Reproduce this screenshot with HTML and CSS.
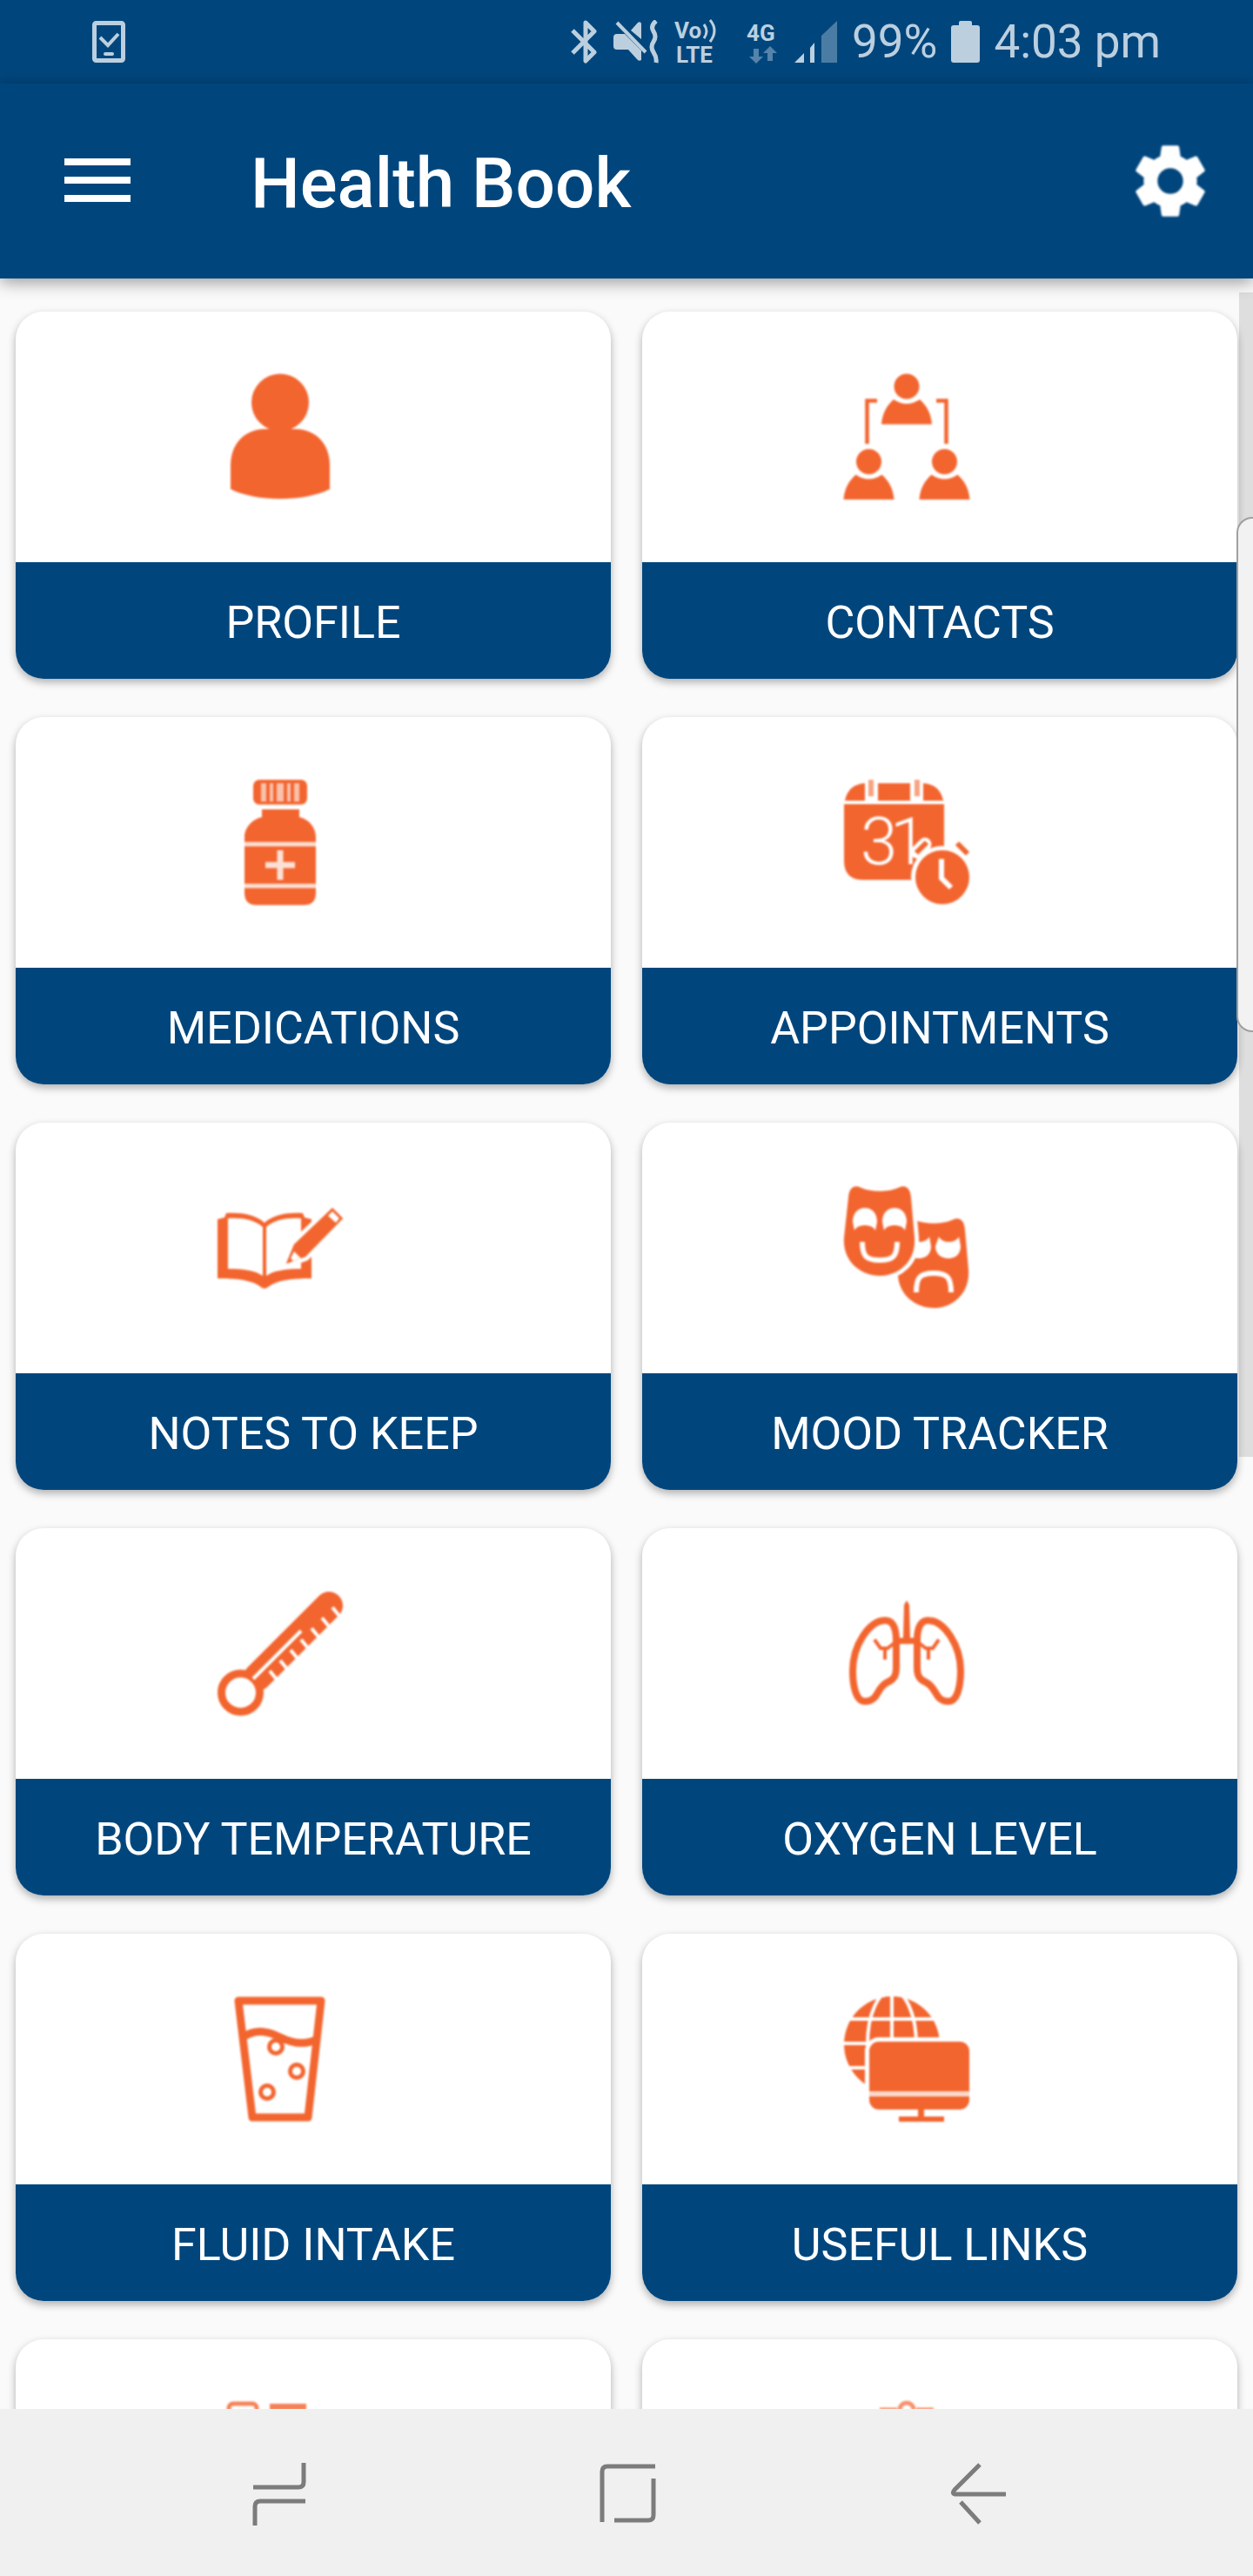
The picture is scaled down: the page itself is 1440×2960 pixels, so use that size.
FILE: index.html
```html
<!DOCTYPE html>
<html lang="en">
<head>
<meta charset="utf-8">
<meta name="viewport" content="width=device-width, initial-scale=1">
<title>Health Book</title>
<link rel="stylesheet" href="styles.css">
</head>
<body>
<div class="app">
  <div class="status">
    <svg class="status-task" width="38" height="48" viewBox="0 0 38 48" fill="none" stroke="currentColor"><rect x="2.5" y="2.5" width="33" height="43" rx="2" stroke-width="5"/><path d="M9 19l9 9L30 15" stroke-width="4"/><path d="M15 38h8" stroke-width="4" stroke-linecap="round"/></svg>
    <div class="status-right">
      <svg width="34" height="50" viewBox="0 0 34 50" fill="none" stroke="currentColor" stroke-width="5" stroke-linejoin="round"><path d="M3 12l25 25-10 10V3l10 10L3 38"/></svg>
      <svg width="54" height="50" viewBox="0 0 54 50"><path fill="currentColor" d="M4 16h9L32 35v11q-3 2-5-1L17 34H4q-4 0-4-4V20q0-4 4-4zM32 4v18L20 12l8-9q3-2 4 1z"/><path d="M4 3l33 34" stroke="currentColor" stroke-width="4"/><path d="M49 1q-7 6-3 12t0 12 0 12 3 12" fill="none" stroke="currentColor" stroke-width="5"/></svg>
      <svg class="badge" width="54" height="52" viewBox="0 0 54 52" fill="currentColor"><text class="net" x="0" y="22">Vo</text><text class="net" x="2" y="50">LTE</text><path d="M34 6q6 8 0 16M41 1q10 12 0 25" fill="none" stroke="currentColor" stroke-width="3"/></svg>
      <svg class="badge" width="52" height="50" viewBox="0 0 52 50" fill="currentColor"><text class="net" x="13" y="24">4G</text><path opacity=".45" d="M21 33h6v9h5l-8 8-8-8h5zM37 47h6v-9h5l-8-8-8 8h5z"/></svg>
      <svg width="50" height="50" viewBox="0 0 50 50" fill="currentColor"><path d="M0 49l11-11v11zM18 32l5-6v23h-5z"/><path opacity=".4" d="M31 18L49 1v48H31z"/></svg>
      <span>99%</span>
      <svg width="33" height="48" viewBox="0 0 33 48" fill="currentColor"><path d="M9 5V2q0-2 2-2h11q2 0 2 2v3h6q3 0 3 3v37q0 3-3 3H3q-3 0-3-3V8q0-3 3-3z"/></svg>
      <span>4:03 pm</span>
    </div>
  </div>

  <header class="appbar">
    <button class="icon-btn" type="button" aria-label="Menu">
      <svg width="76" height="52" viewBox="0 0 76 52" fill="currentColor"><path d="M0 0h76v8H0zM0 21h76v8H0zM0 42h76v8H0z"/></svg>
    </button>
    <h1 class="title">Health Book</h1>
    <button class="icon-btn" type="button" aria-label="Settings">
      <svg class="soft" width="98" height="98" viewBox="0 0 24 24" fill="currentColor"><path d="M19.43 12.98c.04-.32.07-.64.07-.98s-.03-.66-.07-.98l2.11-1.65c.19-.15.24-.42.12-.64l-2-3.46c-.12-.22-.39-.3-.61-.22l-2.49 1c-.52-.4-1.08-.73-1.69-.98l-.38-2.65A.49.49 0 0 0 14 2h-4c-.25 0-.46.18-.49.42l-.38 2.65c-.61.25-1.17.59-1.69.98l-2.49-1c-.23-.09-.49 0-.61.22l-2 3.46c-.13.22-.07.49.12.64l2.11 1.65c-.04.32-.07.65-.07.98s.03.66.07.98l-2.11 1.65c-.19.15-.24.42-.12.64l2 3.46c.12.22.39.3.61.22l2.49-1c.52.4 1.08.73 1.69.98l.38 2.65c.03.24.24.42.49.42h4c.25 0 .46-.18.49-.42l.38-2.65c.61-.25 1.17-.59 1.69-.98l2.49 1c.23.09.49 0 .61-.22l2-3.46c.12-.22.07-.49-.12-.64zM12 15.6A3.6 3.6 0 1 1 12 8.400a3.600 3.600 0 0 1 0 7.200z"/></svg>
    </button>
  </header>

  <main class="content">
    <div class="scrollbar"></div>
    <div class="grid">
      <a class="card" href="#profile">
        <span class="card-art"><svg class="icon soft" viewBox="0 0 144 144"><circle cx="72" cy="32.500" r="33"/><path d="M15 132v-27c0-26 17-42 40-42h34c23 0 40 16 40 42v27c-30 15-84 15-114 0z"/></svg></span>
        <span class="card-label">PROFILE</span>
      </a>
      <a class="card" href="#contacts">
        <span class="card-art"><svg class="icon soft" viewBox="0 0 144 144"><defs><g id="person"><circle cx="72" cy="14" r="14.500"/><path d="M43 57.500C44 45 49 36 57 29q15 10 30 0c8 7 13 16 14 28.500z"/></g></defs><use href="#person"/><use href="#person" x="-43.500" y="86.500"/><use href="#person" x="43.500" y="86.500"/><path class="line" stroke-width="4.500" d="M38 30.500H26.500V80M106 30.500h11.500V80"/></svg></span>
        <span class="card-label">CONTACTS</span>
      </a>
      <a class="card" href="#medications">
        <span class="card-art"><svg class="icon soft" viewBox="0 0 144 144"><rect x="41" width="62" height="28.500" rx="7"/><path class="cut" opacity=".6" d="M50 4h6v21h-6zM60 4h4v21h-4zM68 4h8v21h-8zM80 4h4v21h-4zM88 4h6v21h-6z"/><path d="M51 34h43v9c11 2 19 12 19 23v64q0 14-14 14H45q-14 0-14-14V66c0-11 9-21 20-23z"/><path class="cut-line" opacity=".8" stroke-width="5" d="M31 74h82M31 122h82"/><path class="cut-line" opacity=".8" stroke-width="7" d="M55 98h34M72 81v34"/></svg></span>
        <span class="card-label">MEDICATIONS</span>
      </a>
      <a class="card" href="#appointments">
        <span class="card-art"><svg class="icon soft" viewBox="0 0 144 144"><path d="M0 28h115v87H22Q0 115 0 93zM1 24Q5 5 24 4v20zM39 4h37v20H39zM91 4q19 1 23 20H91z"/><path class="line" opacity=".6" stroke-width="6" d="M31 0v19M84 0v19"/><text class="day" x="19 53" y="97">31</text><circle class="halo" cx="113" cy="112" r="31"/><path class="cut-line" stroke-width="15" stroke-linecap="round" d="M84 83l9-9"/><path class="line" stroke-width="6" d="M83 84l12-12M130 73l12 12"/><path class="cut-line" stroke-width="6" d="M112 91v22l11 11"/></svg></span>
        <span class="card-label">APPOINTMENTS</span>
      </a>
      <a class="card" href="#notes">
        <span class="card-art"><svg class="icon soft" viewBox="0 0 144 144"><path d="M0 39l8-2 2-5c16-1 33 1 44 11 11-10 28-12 44-11l2 5 8 2v68c-23 0-40 2-50 10q-4 3-8 0c-10-8-27-10-50-10z"/><path class="cut" d="M12 38c16-1 30 1 40 10v56c-10-7-24-8-40-8zM56 48c10-9 24-11 40-10v58c-16 0-30 1-40 8z"/><path class="halo" d="M79 90l9-22 44-42 12 12-43 44z"/><path d="M79 90l9-22 44-42 12 12-43 44z"/><path class="cut" d="M88 76l8 8-9 3-3-3zM127 35l5-5 8 8-4 5z"/></svg></span>
        <span class="card-label">NOTES TO KEEP</span>
      </a>
      <a class="card" href="#mood">
        <span class="card-art"><svg class="icon soft" viewBox="0 0 144 144"><defs><path id="mask" d="M5 14C6 1 13-1 20 3c12 5 30 5 42 0 7-4 14-2 15 11l4 46c2 28-19 44-40 44S-2 88 0 60z"/><path id="eye" d="M10 42c0-10 6-16 14-16s14 6 14 16l-2 10c-3-8-21-8-24 0z"/></defs><use href="#mask" x="62" y="37"/><g class="cut"><path id="sad" d="M105 70l4-11c4 8 19 8 23 0l2 11c0 9-6 14-14 14s-15-5-15-14z"/><use href="#sad" x="-34"/></g><path class="cut-line" stroke-width="6" d="M83 123c0-17 4-22 20-22s20 5 20 22"/><use class="halo" href="#mask"/><g class="cut"><use href="#eye"/><use href="#eye" x="34"/></g><path class="cut-line" stroke-width="6" d="M21 65c0 16 4 21 20 21s20-5 20-21"/></svg></span>
        <span class="card-label">MOOD TRACKER</span>
      </a>
      <a class="card" href="#temperature">
        <span class="card-art"><svg class="icon soft" viewBox="0 0 144 144"><path class="line" stroke-width="32" stroke-linecap="round" d="M128 17L46 99"/><circle class="ring" cx="26.500" cy="117" r="22"/><path class="cut-line" stroke-width="4" d="M96 46L41 101"/><path class="cut-line" stroke-width="4" d="M141 30l-9-11M129 42l-9-11M117 54l-9-11M105 67l-9-11M93 79l-9-11M81 91l-9-11M69 103l-9-11"/></svg></span>
        <span class="card-label">BODY TEMPERATURE</span>
      </a>
      <a class="card" href="#oxygen">
        <span class="card-art"><svg class="icon soft" viewBox="0 0 144 144"><defs><g id="lung"><path class="line" stroke-width="8" d="M46 34c9-1 14 7 14 23v31c0 10-3 14-10 17-13 6-10 22-26 22-11 0-14-20-14-35 0-30 19-57 36-58z"/><path class="line" stroke-width="4" d="M35 56l7 10h8l9-7M47 66v13"/></g></defs><use href="#lung"/><use href="#lung" transform="matrix(-1 0 0 1 144 0)"/><path d="M72 11l3 5 1 38h8v7H60v-7h8l1-38z"/></svg></span>
        <span class="card-label">OXYGEN LEVEL</span>
      </a>
      <a class="card" href="#fluid">
        <span class="card-art"><svg class="icon soft" viewBox="0 0 144 144"><g class="line"><path stroke-width="9" stroke-linejoin="round" d="M24 5h95l-15 134H40z"/><path stroke-width="9" d="M29 47c16-11 31-6 43 0s28 10 43 2"/><g stroke-width="5"><circle cx="67" cy="58" r="7.500"/><circle cx="91" cy="86" r="7.500"/><circle cx="57" cy="110" r="7.500"/></g></g></svg></span>
        <span class="card-label">FLUID INTAKE</span>
      </a>
      <a class="card" href="#links">
        <span class="card-art"><svg class="icon soft" viewBox="0 0 144 144"><circle cx="55" cy="55" r="55"/><path class="cut-line" stroke-width="4" d="M0 26h110M0 54h110M0 82h110M55 0v110"/><ellipse class="cut-line" stroke-width="4" cx="55" cy="55" rx="28" ry="62"/><rect class="halo" x="29" y="52" width="115" height="78" rx="11"/><path class="cut-line" stroke-width="6" opacity=".75" d="M29 112h115"/><path d="M85 130h7v8h23v6H63v-6h22z"/></svg></span>
        <span class="card-label">USEFUL LINKS</span>
      </a>
      <a class="card" href="#more">
        <span class="card-art"><svg class="icon soft" viewBox="0 0 144 144"><g opacity=".8"><rect class="line" stroke-width="5" x="13" y="2" width="32" height="40" rx="5"/><path d="M60 2h42v8H60z"/></g></svg></span>
        <span class="card-label"></span>
      </a>
      <a class="card" href="#about">
        <span class="card-art"><svg class="icon soft" viewBox="0 0 144 144"><g class="line" opacity=".7" stroke-width="5"><circle cx="72" cy="9" r="8"/><path d="M41 9h20M83 9h20"/></g></svg></span>
        <span class="card-label"></span>
      </a>
    </div>
    <div class="edge-handle"></div>
  </main>

  <nav class="navbar">
    <button type="button" aria-label="Recent apps"><svg width="72" height="72" viewBox="0 0 72 72"><path d="M64 0v22q0 6-6 6H6M66 44H14q-6 0-6 6v22"/></svg></button>
    <button type="button" aria-label="Home"><svg width="72" height="72" viewBox="0 0 72 72"><path d="M5 68V10q0-6 6-6h55M64 18v42q0 6-6 6H19"/></svg></button>
    <button type="button" aria-label="Back"><svg width="72" height="72" viewBox="0 0 72 72"><path d="M37 2L8 31q-4 5 2 5h57M15 45l22 24"/></svg></button>
  </nav>
</div>
</body>
</html>
```
FILE: styles.css
```css
* { box-sizing: border-box; }

body {
  margin: 0;
  font-family: Roboto, "Liberation Sans", sans-serif;
  background: #fafafa;
}

button {
  border: 0;
  padding: 0;
  background: none;
  color: inherit;
  cursor: pointer;
}

svg { display: block; }

.soft { filter: blur(1px); }

.app {
  display: flex;
  flex-direction: column;
  height: 100vh;
}

/* Status bar */
.status {
  flex: none;
  display: flex;
  align-items: center;
  justify-content: space-between;
  height: 96px;
  padding: 0 106px;
  background: #00467d;
  color: #bccfdf;
  font-size: 53px;
}

.status-right {
  display: flex;
  align-items: center;
  gap: 16px;
}

.badge { overflow: visible; }

.net {
  font-size: 26px;
  font-weight: 700;
}

/* App bar */
.appbar {
  position: relative;
  z-index: 1;
  flex: none;
  display: flex;
  align-items: center;
  height: 224px;
  padding: 0 46px 0 74px;
  background: #00467d;
  color: #fff;
  box-shadow: 0 4px 18px rgba(0, 0, 0, .4);
}

.title {
  flex: 1;
  margin: 0;
  padding: 6px 0 0 138px;
  font-size: 80px;
  font-weight: 500;
}

/* Card grid */
.content {
  position: relative;
  flex: 1;
  min-height: 0;
  overflow: hidden;
}

.grid {
  position: relative;
  display: grid;
  grid-template-columns: 1fr 1fr;
  gap: 44px 36px;
  padding: 38px 18px;
}

.card {
  display: flex;
  flex-direction: column;
  overflow: hidden;
  border-radius: 32px;
  background: #fff;
  color: #fff;
  text-decoration: none;
  box-shadow: 0 4px 10px rgba(0, 0, 0, .3);
}

.card-art {
  display: flex;
  justify-content: center;
  padding: 72px 76px 72px 0;
}

.card-label {
  display: flex;
  align-items: center;
  justify-content: center;
  min-height: 134px;
  padding-top: 4px;
  background: #00467d;
  font-size: 52px;
}

.icon {
  width: 144px;
  height: 144px;
  overflow: visible;
  fill: #f3652f;
}

.line { fill: none; stroke: #f3652f; }
.ring { fill: #fff; stroke: #f3652f; stroke-width: 9px; }
.cut { fill: #fff; }
.cut-line { fill: none; stroke: #fff; }
.halo { stroke: #fff; stroke-width: 10px; paint-order: stroke; }
.day { fill: #fff; font-size: 76px; font-weight: 300; }

.scrollbar {
  position: absolute;
  top: 16px;
  right: 0;
  width: 16px;
  height: calc(55% - 8px);
  background: #dedede;
}

.edge-handle {
  position: absolute;
  top: 274px;
  right: 0;
  width: 19px;
  height: 592px;
  border: 2px solid #a0a0a0;
  border-right: 0;
  border-radius: 18px 0 0 18px;
  background: #f2f2f2;
}

/* System navigation */
.navbar {
  position: relative;
  flex: none;
  display: grid;
  grid-template-columns: repeat(3, 1fr);
  height: 192px;
  padding: 4px 114px 0 120px;
  background: #f0f0f0;
}

.navbar button {
  display: flex;
  align-items: center;
  justify-content: center;
}

.navbar path {
  fill: none;
  stroke: #7c7c7c;
  stroke-width: 5px;
}
```
